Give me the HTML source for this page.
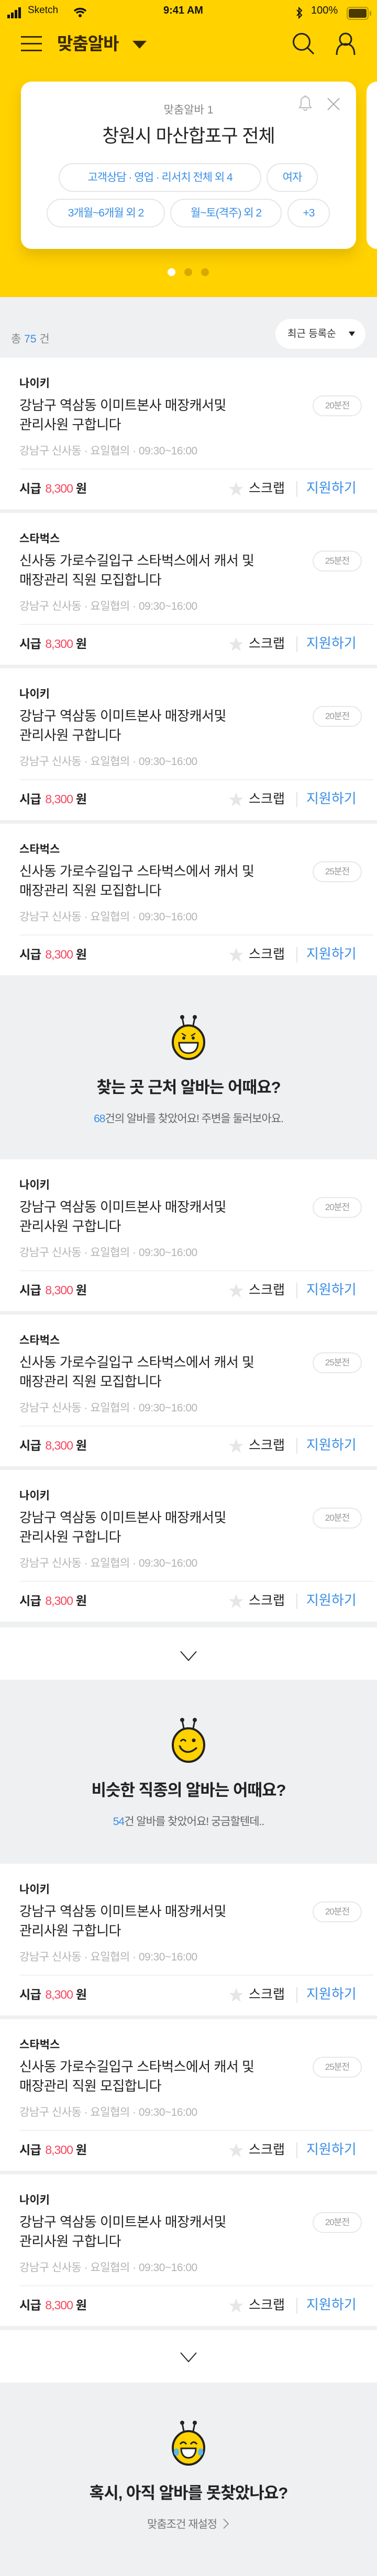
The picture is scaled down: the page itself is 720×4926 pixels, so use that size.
<!DOCTYPE html>
<html><head><meta charset="utf-8">
<style>
*{margin:0;padding:0;box-sizing:border-box}
body{width:720px;height:4926px;background:#eff0f2;font-family:"Liberation Sans","Noto Sans CJK KR",sans-serif;position:relative;overflow:hidden;color:#222}
.abs{position:absolute}
.top{position:absolute;left:0;top:0;width:720px;height:568px;background:#ffd200}
.sb{position:absolute;top:6px;font-size:19px;line-height:28px;color:#111}
.ccard{position:absolute;left:40px;top:156px;width:640px;height:320px;background:#fff;border-radius:20px;box-shadow:0 14px 24px rgba(150,110,0,.25)}
.chip{position:absolute;height:55px;border:2px solid #e6e6e6;border-radius:28px;color:#3a8ee6;font-size:21px;line-height:51px;text-align:center;letter-spacing:-1px;background:#fff}
.dot{position:absolute;top:513px;width:15px;height:15px;border-radius:50%;background:#d6a900}
.card{position:absolute;left:0;width:720px;height:290px;background:#fff}
.card .co{position:absolute;left:37px;top:35px;font-size:21px;line-height:30px;font-weight:bold;color:#222}
.card .ti{position:absolute;left:37px;top:73px;width:530px;font-size:26px;line-height:37px;color:#222;letter-spacing:-0.5px}
.card .mt{position:absolute;left:37px;top:164px;font-size:21px;line-height:30px;color:#b3b3b3;letter-spacing:-0.5px}
.card .bd{position:absolute;left:597px;top:72px;width:94px;height:40px;border:2px solid #e8e8e8;border-radius:20px;font-size:17px;line-height:36px;text-align:center;color:#999;letter-spacing:-1px}
.card .ln{position:absolute;left:37px;right:7px;top:212px;height:2px;background:#f1f1f1}
.card .pay{position:absolute;left:37px;top:234px;font-size:23px;line-height:32px;color:#222;font-weight:bold;letter-spacing:-0.5px}
.card .pay b{color:#f4475c;font-weight:normal;margin-left:8px;letter-spacing:-1px}
.card .star{position:absolute;left:436px;top:236px}
.card .scr{position:absolute;left:475px;top:233px;font-size:25px;line-height:34px;color:#222}
.card .sep{position:absolute;left:566px;top:236px;width:2px;height:30px;background:#e4e4e4}
.card .app{position:absolute;left:585px;top:232px;font-size:26px;line-height:34px;color:#3a8ee6}
.sec{position:absolute;left:0;width:720px;text-align:center}
.sec .h{position:absolute;left:0;width:720px;top:190px;font-size:31px;line-height:44px;font-weight:bold;color:#222;letter-spacing:-1px}
.sec .s{position:absolute;left:0;width:720px;top:256px;font-size:21px;line-height:32px;color:#666;letter-spacing:-1px;white-space:nowrap}
.sec .s b{color:#3a8ee6;font-weight:normal}
.sec .bee{position:absolute;left:322px;top:70px}
.more{position:absolute;left:0;width:720px;height:100px;background:#fff}
</style></head><body>
<div class="top"></div>
<svg class="abs" style="left:14px;top:14px" width="30" height="22"><rect x="0" y="14" width="5" height="7" fill="#111"/><rect x="7" y="10" width="5" height="11" fill="#111"/><rect x="14" y="5" width="5" height="16" fill="#111"/><rect x="21" y="0" width="5" height="21" fill="#111"/></svg>
<div class="sb" style="left:53px">Sketch</div>
<svg class="abs" style="left:140px;top:14px" width="26" height="20"><path d="M2 7 A16 16 0 0 1 24 7" stroke="#111" stroke-width="3.4" fill="none"/><path d="M6 11 A10 10 0 0 1 20 11" stroke="#111" stroke-width="3.4" fill="none"/><circle cx="13" cy="16" r="3" fill="#111"/></svg>
<div class="sb" style="left:312px;font-weight:bold;font-size:20px">9:41 AM</div>
<svg class="abs" style="left:565px;top:12px" width="14" height="26"><path d="M2 7 L11 17 L6 22 L6 3 L11 8 L2 18" stroke="#111" stroke-width="2" fill="none"/></svg>
<div class="sb" style="left:594px;font-size:20px">100%</div>
<div class="abs" style="left:662px;top:13px;width:42px;height:25px;border:2px solid #b89700;border-radius:6px;padding:2px"><div style="width:100%;height:100%;background:#4a3a00;border-radius:3px"></div></div>
<div class="abs" style="left:706px;top:21px;width:3px;height:9px;background:#b89700;border-radius:1px"></div>
<svg class="abs" style="left:40px;top:69px" width="40" height="30"><rect y="0" width="40" height="3" fill="#3a2a00"/><rect y="13" width="40" height="3" fill="#3a2a00"/><rect y="26" width="40" height="3" fill="#3a2a00"/></svg>
<div class="abs" style="left:109px;top:62px;font-size:33px;line-height:44px;font-weight:bold;color:#3a2a00;letter-spacing:-1px">맞춤알바</div>
<svg class="abs" style="left:253px;top:78px" width="27" height="15"><path d="M0 0 H27 L13.5 15 Z" fill="#3a2a00"/></svg>
<svg class="abs" style="left:558px;top:62px" width="44" height="44"><circle cx="18" cy="18" r="15.5" stroke="#222" stroke-width="3" fill="none"/><path d="M29 29 L41 41" stroke="#222" stroke-width="3"/></svg>
<svg class="abs" style="left:640px;top:62px" width="40" height="44"><circle cx="20" cy="13" r="11" stroke="#222" stroke-width="3" fill="none"/><path d="M3 43 C3 28 10 22 20 22 C30 22 37 28 37 43" stroke="#222" stroke-width="3" fill="none"/></svg>
<div class="abs" style="left:700px;top:156px;width:40px;height:320px;background:#fff;border-radius:20px"></div>
<div class="ccard">
 <svg class="abs" style="left:528px;top:25px" width="30" height="32"><path d="M4 25 H26 L23 20 V12 A8 8 0 0 0 7 12 V20 Z" stroke="#bbb" stroke-width="2" fill="none"/><path d="M15 1 V4 M12 27 A3 3 0 0 0 18 27" stroke="#bbb" stroke-width="2" fill="none"/></svg>
 <svg class="abs" style="left:585px;top:31px" width="24" height="24"><path d="M1 1 L23 23 M23 1 L1 23" stroke="#aaa" stroke-width="2"/></svg>
 <div class="abs" style="left:0;width:640px;top:40px;text-align:center;font-size:21px;line-height:30px;color:#888">맞춤알바 1</div>
 <div class="abs" style="left:0;width:640px;top:80px;text-align:center;font-size:35px;line-height:50px;color:#222;letter-spacing:-1px">창원시 마산합포구 전체</div>
</div>
<div class="chip" style="left:112px;top:312px;width:387px">고객상담 · 영업 · 리서치 전체 외 4</div>
<div class="chip" style="left:509px;top:312px;width:98px">여자</div>
<div class="chip" style="left:89px;top:380px;width:226px">3개월~6개월 외 2</div>
<div class="chip" style="left:325px;top:380px;width:213px">월~토(격주) 외 2</div>
<div class="chip" style="left:549px;top:380px;width:81px">+3</div>
<div class="dot" style="left:320px;background:#fff"></div>
<div class="dot" style="left:352px"></div>
<div class="dot" style="left:384px"></div>
<div class="abs" style="left:21px;top:634px;font-size:21px;line-height:30px;color:#888">총 <span style="color:#3a8ee6">75</span> 건</div>
<div class="abs" style="left:526px;top:610px;width:172px;height:57px;background:#fff;border-radius:29px;font-size:19px;line-height:57px;color:#333;padding-left:23px">최근 등록순<svg style="position:absolute;left:140px;top:24px" width="12" height="9"><path d="M0 0H12L6 9Z" fill="#222"/></svg></div>

<div id="cards"></div>

<div class="sec" style="top:1868px;height:349px">
 <svg class="bee" width="76" height="90" viewBox="0 0 76 90"><path d="M30 28 L26 8 M46 28 L50 8" stroke="#222" stroke-width="3"/><circle cx="26" cy="7" r="4" fill="#222"/><circle cx="50" cy="7" r="4" fill="#222"/><ellipse cx="38" cy="55" rx="30" ry="32" fill="#ffd200" stroke="#222" stroke-width="4"/><path d="M25 38 L33 43 M51 38 L43 43" stroke="#222" stroke-width="2.5"/><circle cx="29" cy="47" r="3" fill="#222"/><circle cx="47" cy="47" r="3" fill="#222"/><path d="M20 56 H56 C56 70 48 76 38 76 C28 76 20 70 20 56 Z" fill="#fff" stroke="#222" stroke-width="3"/></svg>
 <div class="h">찾는 곳 근처 알바는 어때요?</div>
 <div class="s"><b>68</b>건의 알바를 찾았어요! 주변을 둘러보아요.</div>
</div>
<div class="more" style="top:3112px"><svg style="position:absolute;left:344px;top:45px" width="32" height="20"><path d="M1 1 L16 18 L31 1" stroke="#222" stroke-width="2" fill="none"/></svg></div>
<div class="sec" style="top:3212px;height:352px">
 <svg class="bee" width="76" height="90" viewBox="0 0 76 90"><path d="M30 28 L26 8 M46 28 L50 8" stroke="#222" stroke-width="3"/><circle cx="26" cy="7" r="4" fill="#222"/><circle cx="50" cy="7" r="4" fill="#222"/><ellipse cx="38" cy="55" rx="30" ry="32" fill="#ffd200" stroke="#222" stroke-width="4"/><path d="M23 48 Q28 41 33 48" stroke="#222" stroke-width="3" fill="none"/><circle cx="48" cy="46" r="3.5" fill="#222"/><path d="M20 58 Q22 56 23 61 Q36 76 54 60" stroke="#222" stroke-width="3.5" fill="none"/></svg>
 <div class="h">비슷한 직종의 알바는 어때요?</div>
 <div class="s"><b>54</b>건 알바를 찾았어요! 궁금할텐데..</div>
</div>
<div class="more" style="top:4456px"><svg style="position:absolute;left:344px;top:42px" width="32" height="20"><path d="M1 1 L16 18 L31 1" stroke="#222" stroke-width="2" fill="none"/></svg></div>
<div class="sec" style="top:4556px;height:370px">
 <svg class="bee" width="76" height="90" viewBox="0 0 76 90"><path d="M30 28 L26 8 M46 28 L50 8" stroke="#222" stroke-width="3"/><circle cx="26" cy="7" r="4" fill="#222"/><circle cx="50" cy="7" r="4" fill="#222"/><ellipse cx="38" cy="55" rx="30" ry="32" fill="#ffd200" stroke="#222" stroke-width="4"/><path d="M22 48 Q28 40 34 48 M42 48 Q48 40 54 48" stroke="#222" stroke-width="3" fill="none"/><path d="M24 56 H52 C52 68 46 74 38 74 C30 74 24 68 24 56 Z" fill="#fff" stroke="#222" stroke-width="3"/><ellipse cx="15" cy="63" rx="5" ry="7" fill="#5bb8f0"/><ellipse cx="61" cy="63" rx="5" ry="7" fill="#5bb8f0"/></svg>
 <div class="h">혹시, 아직 알바를 못찾았나요?</div>
 <div class="s" style="color:#777">맞춤조건 재설정 <svg width="14" height="20" style="vertical-align:-2px;margin-left:6px;display:inline-block"><path d="M2 1 L11 10 L2 19" stroke="#999" stroke-width="2" fill="none"/></svg></div>
</div>

<script>
var A={co:"나이키",ti:"강남구 역삼동 이미트본사 매장캐서및<br>관리사원 구합니다",bd:"20분전"};
var B={co:"스타벅스",ti:"신사동 가로수길입구 스타벅스에서 캐서 및<br>매장관리 직원 모집합니다",bd:"25분전"};
var tops=[[684,A],[981,B],[1278,A],[1575,B],[2217,A],[2514,B],[2811,A],[3564,A],[3861,B],[4158,A]];
var h="";
tops.forEach(function(t){var d=t[1];
h+='<div class="card" style="top:'+t[0]+'px"><div class="co">'+d.co+'</div><div class="ti">'+d.ti+'</div><div class="bd">'+d.bd+'</div><div class="mt">강남구 신사동 · 요일협의 · 09:30~16:00</div><div class="ln"></div><div class="pay">시급<b>8,300</b> 원</div><svg class="star" width="30" height="30" viewBox="0 0 24 24"><path d="M12 1 L15 9 L23 9 L16.5 14 L19 22.5 L12 17.5 L5 22.5 L7.5 14 L1 9 L9 9 Z" fill="#e6e6e6"/></svg><div class="scr">스크랩</div><div class="sep"></div><div class="app">지원하기</div></div>';});
document.getElementById("cards").innerHTML=h;
</script>
</body></html>
